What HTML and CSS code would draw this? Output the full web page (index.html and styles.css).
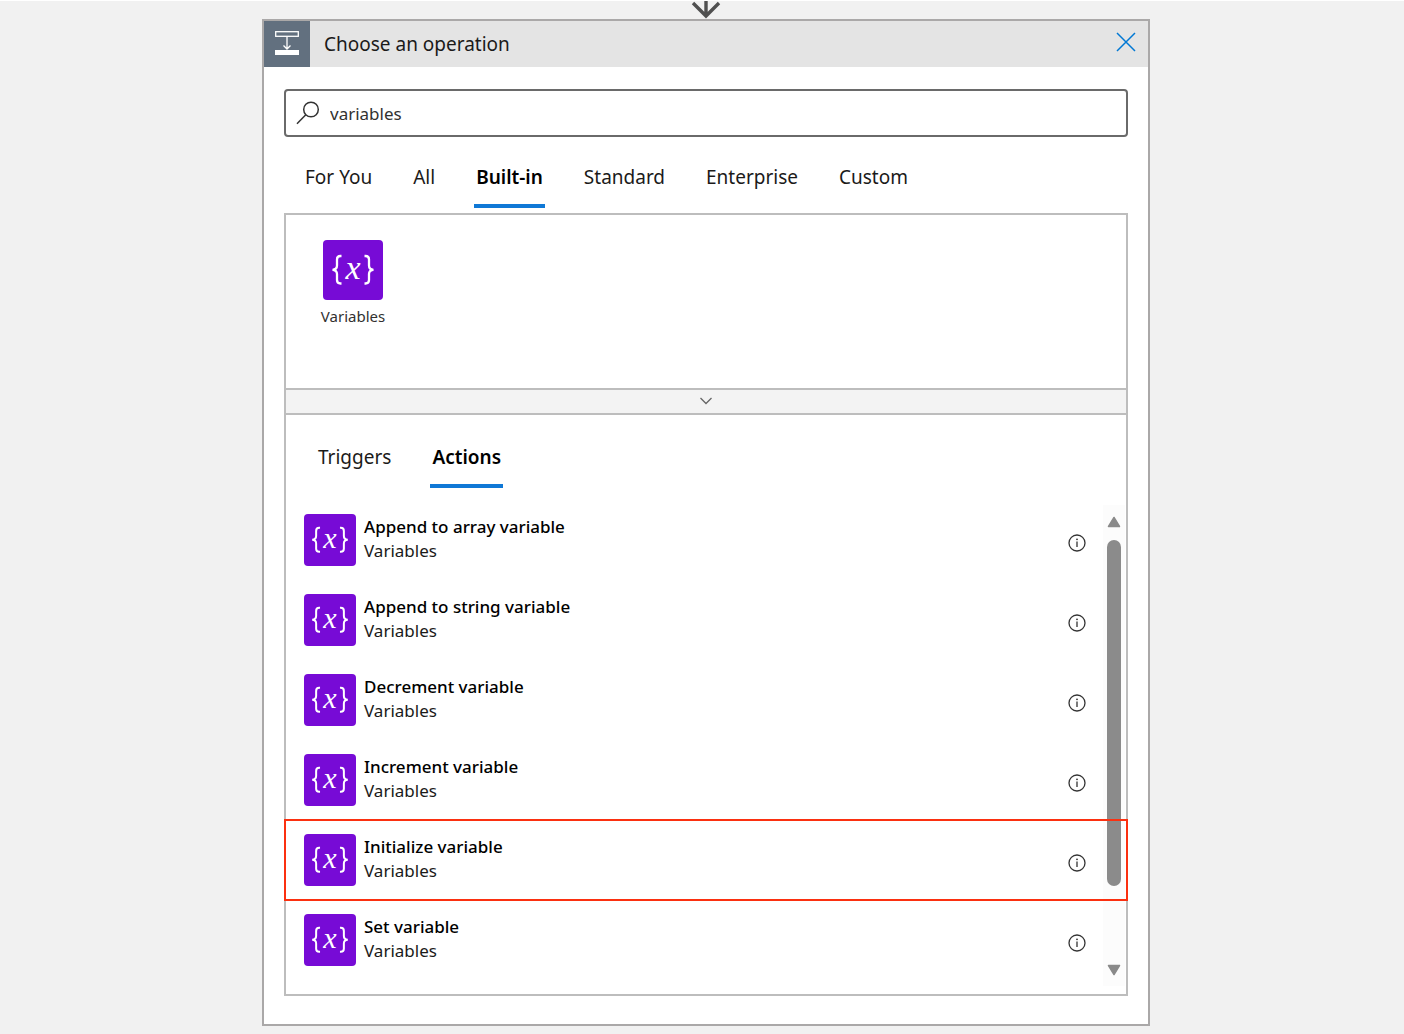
FILE: index.html
```html
<!DOCTYPE html>
<html lang="en">
<head>
    <meta charset="UTF-8">
    <title>Choose an operation</title>
    <link rel="stylesheet" href="styles.css">
</head>
<body>
    <!-- shared icons -->
    <svg class="sprite" aria-hidden="true">
        <symbol id="icon-braces" viewBox="0 0 60 60">
            <g fill="none" stroke="#fff" stroke-width="2.3">
                <path d="M18.500 16H17.500Q14 16 14 19.500V25.500Q14 29.500 9.500 29.800Q14 30.100 14 34V40Q14 43.500 17.500 43.500H18.500"/>
                <path d="M41.500 16H42.500Q46 16 46 19.500V25.500Q46 29.500 50.500 29.800Q46 30.100 46 34V40Q46 43.500 42.500 43.500H41.500"/>
            </g>
        </symbol>
        <symbol id="icon-info" viewBox="0 0 18 18">
            <circle cx="9" cy="9" r="8" fill="none" stroke="#333" stroke-width="1.3"/>
            <path d="M9 7.500V13" stroke="#333" stroke-width="1.3"/>
            <circle cx="9" cy="5.300" r="0.900" fill="#333"/>
        </symbol>
    </svg>

    <svg class="flow-arrow" viewBox="0 0 30 18" aria-hidden="true">
        <path d="M15 0V16M2 2L15 15L28 2" fill="none" stroke="#505050" stroke-width="3.400"/>
    </svg>

    <main class="card">
        <header class="card-header">
            <div class="card-icon">
                <svg width="26" height="26" viewBox="0 0 26 26" fill="none" stroke="#fff" aria-hidden="true">
                    <rect x="1.700" y="1.700" width="22.600" height="4.600" stroke-width="1.300"/>
                    <path d="M13 6.500V18.500M9.500 15.500L13 19L16.500 15.500" stroke-width="1.300"/>
                    <rect x="1" y="20" width="24" height="5" fill="#fff" stroke="none"/>
                </svg>
            </div>
            <h1>Choose an operation</h1>
            <button class="close" aria-label="Close">
                <svg width="20" height="20" viewBox="0 0 20 20" aria-hidden="true">
                    <path d="M1 1L19 19M19 1L1 19" stroke="#0078d4" stroke-width="1.500"/>
                </svg>
            </button>
        </header>

        <div class="card-body">
            <label class="search">
                <svg width="24" height="24" viewBox="0 0 24 24" fill="none" stroke="#333" stroke-width="1.500" aria-hidden="true">
                    <circle cx="15" cy="8.500" r="7.300"/>
                    <path d="M9.800 13.700L1 22.800"/>
                </svg>
                <input type="text" value="variables" aria-label="Search connectors and actions">
            </label>

            <nav class="tabs">
                <button class="tab">For You</button>
                <button class="tab">All</button>
                <button class="tab active">Built-in</button>
                <button class="tab">Standard</button>
                <button class="tab">Enterprise</button>
                <button class="tab">Custom</button>
            </nav>

            <section class="panel">
                <div class="connectors">
                    <button class="connector">
                        <span class="tile tile-large"><svg><use href="#icon-braces"/></svg><i>x</i></span>
                        <span>Variables</span>
                    </button>
                </div>

                <button class="collapse" aria-label="Collapse connectors">
                    <svg width="14" height="8" viewBox="0 0 14 8" aria-hidden="true">
                        <path d="M1.500 1L7 6.500L12.500 1" fill="none" stroke="#666" stroke-width="1.300"/>
                    </svg>
                </button>

                <nav class="tabs panel-tabs">
                    <button class="tab">Triggers</button>
                    <button class="tab active">Actions</button>
                </nav>

                <div class="results">
                    <ul class="operations">
                        <li class="operation">
                            <span class="tile"><svg><use href="#icon-braces"/></svg><i>x</i></span>
                            <div class="operation-text">
                                <strong>Append to array variable</strong>
                                <span>Variables</span>
                            </div>
                            <button class="info" aria-label="About Append to array variable"><svg><use href="#icon-info"/></svg></button>
                        </li>
                        <li class="operation">
                            <span class="tile"><svg><use href="#icon-braces"/></svg><i>x</i></span>
                            <div class="operation-text">
                                <strong>Append to string variable</strong>
                                <span>Variables</span>
                            </div>
                            <button class="info" aria-label="About Append to string variable"><svg><use href="#icon-info"/></svg></button>
                        </li>
                        <li class="operation">
                            <span class="tile"><svg><use href="#icon-braces"/></svg><i>x</i></span>
                            <div class="operation-text">
                                <strong>Decrement variable</strong>
                                <span>Variables</span>
                            </div>
                            <button class="info" aria-label="About Decrement variable"><svg><use href="#icon-info"/></svg></button>
                        </li>
                        <li class="operation">
                            <span class="tile"><svg><use href="#icon-braces"/></svg><i>x</i></span>
                            <div class="operation-text">
                                <strong>Increment variable</strong>
                                <span>Variables</span>
                            </div>
                            <button class="info" aria-label="About Increment variable"><svg><use href="#icon-info"/></svg></button>
                        </li>
                        <li class="operation highlighted">
                            <span class="tile"><svg><use href="#icon-braces"/></svg><i>x</i></span>
                            <div class="operation-text">
                                <strong>Initialize variable</strong>
                                <span>Variables</span>
                            </div>
                            <button class="info" aria-label="About Initialize variable"><svg><use href="#icon-info"/></svg></button>
                        </li>
                        <li class="operation">
                            <span class="tile"><svg><use href="#icon-braces"/></svg><i>x</i></span>
                            <div class="operation-text">
                                <strong>Set variable</strong>
                                <span>Variables</span>
                            </div>
                            <button class="info" aria-label="About Set variable"><svg><use href="#icon-info"/></svg></button>
                        </li>
                    </ul>

                    <div class="scrollbar" aria-hidden="true">
                        <svg width="14" height="12" viewBox="0 0 14 12"><path d="M7 1.500L12.500 10.500H1.500Z" fill="#8a8a8a" stroke="#8a8a8a" stroke-width="1.500" stroke-linejoin="round"/></svg>
                        <div class="thumb"></div>
                        <svg width="14" height="12" viewBox="0 0 14 12"><path d="M7 10.500L12.500 1.500H1.500Z" fill="#8a8a8a" stroke="#8a8a8a" stroke-width="1.500" stroke-linejoin="round"/></svg>
                    </div>
                </div>
            </section>
        </div>
    </main>
</body>
</html>
```
FILE: styles.css
```css
* {
    box-sizing: border-box;
}
body {
    margin: 0;
    padding: 0 0 8px 8px;
    border-top: 1px solid #fff;
    background: #f1f1f1;
    color: #1b1a19;
    font-family: "Noto Sans", "Open Sans", sans-serif;
    font-size: 17px;
}
button {
    padding: 0;
    border: none;
    background: none;
    color: inherit;
    font: inherit;
    cursor: pointer;
}
svg {
    display: block;
    flex: none;
}
.sprite {
    position: absolute;
    width: 0;
    height: 0;
}
.flow-arrow {
    width: 30px;
    height: 18px;
    margin: 0 auto;
}
.card {
    max-width: 888px;
    margin: 0 auto;
    border: 2px solid #aaa8a8;
    background: #fff;
}
.card-header {
    display: flex;
    align-items: center;
    height: 46px;
    background: #e4e4e4;
}
.card-icon {
    display: flex;
    align-items: center;
    justify-content: center;
    width: 46px;
    height: 46px;
    padding-bottom: 2px;
    background: #62707f;
}
h1 {
    flex: 1;
    margin: 0 14px;
    font-size: 19px;
    font-weight: 400;
    line-height: 24px;
}
.close {
    margin-right: 12px;
    padding-bottom: 4px;
}
.card-body {
    padding: 22px 20px 28px;
}
.search {
    display: flex;
    align-items: center;
    gap: 10px;
    height: 48px;
    padding: 0 10px;
    border: 2px solid #6a6a6a;
    border-radius: 4px;
}
.search input {
    flex: 1;
    padding: 0;
    border: none;
    outline: none;
    background: none;
    color: #323130;
    font: inherit;
}
.tabs {
    display: flex;
    gap: 37px;
    padding: 9px 19px 5px;
}
.tab {
    height: 62px;
    padding: 0 2px;
    border: solid transparent;
    border-width: 4px 0;
    font-size: 19px;
}
.tab.active {
    border-bottom-color: #0f78d6;
    color: #000;
    font-weight: 600;
}
.panel {
    border: 2px solid #bdbdbd;
}
.connectors {
    height: 173px;
    padding: 25px 30px;
}
.connector {
    display: flex;
    flex-direction: column;
    align-items: center;
    gap: 4px;
    width: 74px;
    color: #323130;
    font-size: 15px;
    line-height: 24px;
}
/* purple {x} tile, the x is stacked over the braces */
.tile {
    display: grid;
    place-items: center;
    width: 52px;
    height: 52px;
    border-radius: 4px;
    background: #770bd6;
    color: #fff;
    font-family: "Liberation Serif", serif;
    font-size: 30px;
    line-height: 1;
}
.tile svg,
.tile i {
    grid-area: 1 / 1;
}
.tile svg {
    width: 100%;
    height: 100%;
}
.tile i {
    padding-bottom: 4px;
}
.tile-large {
    width: 60px;
    height: 60px;
    font-size: 34px;
}
.collapse {
    display: flex;
    align-items: center;
    justify-content: center;
    width: 100%;
    height: 27px;
    padding-bottom: 2px;
    border: solid #bdbdbd;
    border-width: 2px 0;
    background: #f3f3f3;
}
.panel-tabs {
    padding: 11px 30px 12px;
}
.results {
    position: relative;
    padding-bottom: 14px;
}
.operations {
    margin: 0;
    padding: 0;
    list-style: none;
}
.operation {
    display: flex;
    align-items: center;
    gap: 8px;
    height: 80px;
    padding: 0 40px 0 18px;
}
.highlighted {
    position: relative;
    z-index: 1;
    margin: 0 -1px;
    padding: 0 41px 0 19px;
    outline: 2px solid #fb3010;
    outline-offset: -1px;
}
.operation-text {
    flex: 1;
    padding-bottom: 2px;
    line-height: 24px;
}
.operation-text strong,
.operation-text span {
    display: block;
}
.operation-text strong {
    color: #000;
    font-weight: 500;
}
.info {
    padding-top: 6px;
}
.info svg {
    width: 18px;
    height: 18px;
}
/* drawn scrollbar, lies over the right edge of the rows */
.scrollbar {
    position: absolute;
    top: 5px;
    right: 1px;
    bottom: 8px;
    display: flex;
    flex-direction: column;
    align-items: center;
    width: 22px;
    padding: 11px 0 10px;
    background: #fcfcfc;
}
.thumb {
    width: 14px;
    height: 346px;
    margin: 12px 0 auto;
    border-radius: 7px;
    background: #8b8b8b;
}
```
